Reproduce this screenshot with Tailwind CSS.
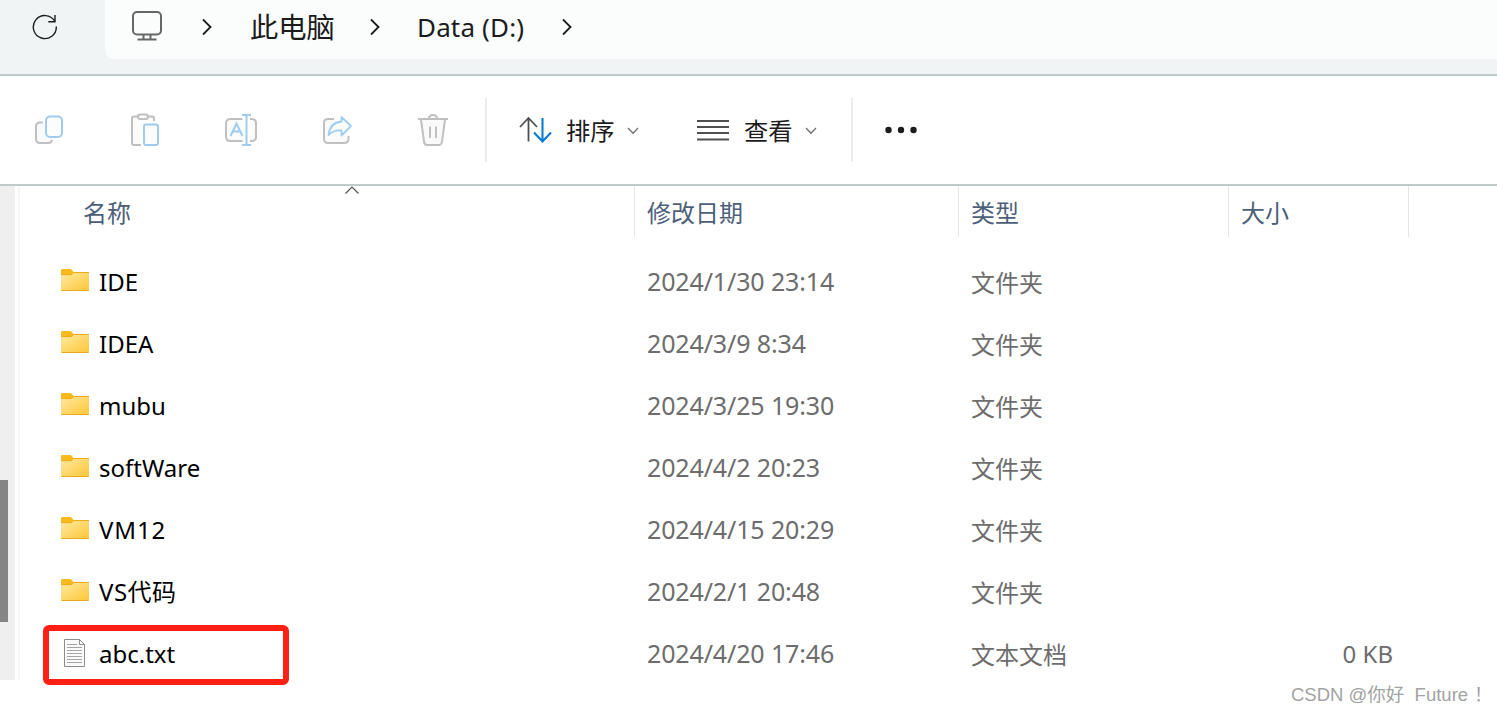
<!DOCTYPE html>
<html lang="zh-CN">
  <head>
    <meta charset="UTF-8" />
    <title>Data (D:)</title>
    <meta name="viewport" content="width=device-width, initial-scale=1.0" />
    <script src="https://cdn.jsdelivr.net/npm/@tailwindcss/browser@4"></script>
  </head>
  <body class="relative h-[713px] w-[1497px] overflow-hidden bg-white font-['Noto_Sans','Noto_Sans_CJK_SC',sans-serif] text-black">
    <!-- Shared icons -->
    <svg class="absolute h-0 w-0">
      <defs>
        <linearGradient id="folderFill" x1="0" y1="0" x2="1" y2="1">
          <stop offset="0" stop-color="#ffe8a0" />
          <stop offset="1" stop-color="#fdc736" />
        </linearGradient>
        <symbol id="folder" viewBox="0 0 28 22">
          <path d="M0 1Q0 0 1 0H9Q10 0 11 1.2L12.5 3H27Q28 3 28 4V10H0Z" fill="#fab91c" />
          <path d="M0 6H9.5Q10.5 6 11.2 5.2L12.2 4H28V21Q28 22 27 22H1Q0 22 0 21Z" fill="url(#folderFill)" />
          <path d="M0 5.6H9.5Q10.5 5.6 11.2 4.8L12.6 3.5H28" fill="none" stroke="#eeab18" />
          <path d="M.5 21.5H27.5" stroke="#e9a820" />
        </symbol>
        <symbol id="chevron" viewBox="0 0 10 18">
          <path d="M1 1.5L8.5 9L1 16.5" fill="none" stroke="#1c1c1c" stroke-width="1.8" />
        </symbol>
      </defs>
    </svg>

    <!-- Address bar -->
    <header class="flex h-[76px] items-start border-b-2 border-[#bfcacb] bg-[#f0f4f5]">
      <div class="flex h-[59px] w-[105px] items-start pt-[13px] pl-8">
        <svg class="h-[27px] w-[27px]" viewBox="0 0 27 27" fill="none" stroke="#1c1c1c" stroke-width="1.4">
          <path d="M24.3 13.5A11.5 11.5 0 1 1 22.7 8.2" />
          <path d="M23 2V8.7H16.3" />
        </svg>
      </div>
      <nav class="flex h-[59px] flex-1 items-start rounded-bl-lg bg-[#fbfdfc] text-[#1c1c1c]">
        <svg class="mt-[10px] ml-[27px] h-8 w-[30px]" viewBox="0 0 30 32" fill="none" stroke="#666" stroke-width="2">
          <rect x="1" y="2" width="28" height="22.5" rx="4" />
          <path d="M11.5 25V29M18.5 25V29M5.5 29.5H24.5" />
        </svg>
        <svg class="mt-[18px] ml-10 h-[18px] w-[10px]"><use href="#chevron" /></svg>
        <span class="ml-[38px] w-[85px] text-[28.3px] leading-[54px] whitespace-nowrap">此电脑</span>
        <svg class="mt-[18px] ml-[35px] h-[18px] w-[10px]"><use href="#chevron" /></svg>
        <span class="ml-[37px] w-[109px] text-[26px] leading-[54px] tracking-[0.15px] whitespace-nowrap">Data (D:)</span>
        <svg class="mt-[18px] ml-[36px] h-[18px] w-[10px]"><use href="#chevron" /></svg>
      </nav>
    </header>

    <!-- Toolbar -->
    <div class="flex h-[110px] items-center border-b-2 border-[#bfcacb] text-2xl text-[#1c1c1c]">
      <svg class="ml-[34px] h-9 w-[30px]" viewBox="0 0 30 36" fill="none" stroke-width="2">
        <path d="M9 10.5H6Q2 10.5 2 14.5V27Q2 31 6 31H14Q17.5 31 18 28" fill="#fafafa" stroke="#c0c0c0" />
        <rect x="12" y="4.5" width="16" height="20.5" rx="4" fill="#fcfcfc" stroke="#a0cdef" />
      </svg>
      <svg class="ml-[66px] h-9 w-[30px]" viewBox="0 0 30 36" fill="none" stroke-width="2">
        <path d="M8 4.5H4Q2 4.5 2 6.5V31Q2 33 4 33H11M18 4.5H22Q24 4.5 24 6.5V9" fill="#fbfbfb" stroke="#c0c0c0" />
        <rect x="8" y="2.5" width="10" height="4.5" rx="2.2" fill="#fff" stroke="#c0c0c0" />
        <rect x="14" y="12.5" width="14" height="20.5" rx="2" fill="#fcfcfc" stroke="#a0cdef" />
      </svg>
      <svg class="ml-[65px] h-9 w-[33px]" viewBox="0 0 33 36" fill="none" stroke-width="2">
        <path d="M17.5 7H5.5Q1 7 1 11.5V24.5Q1 29 5.5 29H17.5M25 7H27Q31 7 31 11.5V24.5Q31 29 27 29H25" fill="#fbfbfb" stroke="#c0c0c0" />
        <path d="M21.5 3V33M17 3H26M17 33H26M5.5 24L11.5 11.5L17.5 24M8 19.5H15" stroke="#a0cdef" />
      </svg>
      <svg class="ml-[64px] h-9 w-[31px]" viewBox="0 0 31 36" fill="none" stroke-width="2">
        <path d="M12 7H6Q2 7 2 11V27Q2 31 6 31H22Q26.5 31 26.5 27V24" fill="#fafafa" stroke="#c0c0c0" />
        <path d="M19.5 5L29 14L19.5 23.5V18.5Q12 17.5 6.5 23Q8 10.5 19.5 9.5Z" fill="#fcfcfc" stroke="#a0cdef" stroke-width="1.8" stroke-linejoin="round" />
      </svg>
      <svg class="ml-[65px] h-9 w-[30px]" viewBox="0 0 30 36" fill="none" stroke="#c0c0c0" stroke-width="2">
        <path d="M3 7.5L6 29.5Q6.4 33 9 33H21Q23.6 33 24 29.5L27 7.5" fill="#fafafa" />
        <path d="M0 7H30M11 7Q11 3 15 3T19 7M12 14.5V26M18 14.5V26" />
      </svg>
      <div class="ml-[37px] h-16 w-0.5 bg-[#ececec]"></div>
      <svg class="ml-8 h-9 w-[33px]" viewBox="0 0 33 36" fill="none" stroke-width="1.8">
        <path d="M9.5 29.5V6.5M1 15L9.5 6L18 15" stroke="#505050" />
        <path d="M23.5 6V29M15 20.5L23.5 29.5L32 20.5" stroke="#0078d4" stroke-width="2" />
      </svg>
      <span class="mt-0.5 ml-[14px] w-[49px] text-[24.3px]">排序</span>
      <svg class="mt-px ml-3 h-2 w-3" viewBox="0 0 12 8" fill="none" stroke="#707070" stroke-width="1.3"><path d="M1 1L6 6.3L11 1" /></svg>
      <svg class="ml-[58px] h-[22px] w-8" viewBox="0 0 32 22" stroke="#505050" stroke-width="1.8">
        <path d="M0 2H32M0 8H32M0 14H32M0 20.5H32" />
      </svg>
      <span class="mt-0.5 ml-[15px] w-[49px] text-[24.3px]">查看</span>
      <svg class="mt-px ml-3 h-2 w-3" viewBox="0 0 12 8" fill="none" stroke="#707070" stroke-width="1.3"><path d="M1 1L6 6.3L11 1" /></svg>
      <div class="ml-[34px] h-16 w-0.5 bg-[#ececec]"></div>
      <svg class="ml-8 h-2 w-8" viewBox="0 0 32 8" fill="#1c1c1c">
        <circle cx="3.5" cy="4" r="3.2" />
        <circle cx="16" cy="4" r="3.2" />
        <circle cx="28.5" cy="4" r="3.2" />
      </svg>
    </div>

    <div class="flex">
      <!-- Navigation pane scrollbar -->
      <div class="mr-[3px] h-[494px] w-[15px] bg-[#efefef] pt-[294px]">
        <div class="h-[142px] w-2 bg-[#858585]"></div>
      </div>
      <div class="h-[494px] w-0.5 bg-[#f6f6f6]"></div>

      <!-- File list -->
      <main class="flex-1">
        <div class="relative grid h-[51px] grid-cols-[615px_324px_270px_180px] text-2xl leading-[53px] text-[#4c607a]">
          <svg class="absolute top-0 left-[325px] h-[9px] w-[14px]" viewBox="0 0 14 9" fill="none" stroke="#505050" stroke-width="1.2"><path d="M.5 7.5L7 1L13.5 7.5" /></svg>
          <div class="h-[51px] border-r border-[#e5e5e5] pl-[63px]">名称</div>
          <div class="h-[51px] border-r border-[#e5e5e5] pl-3">修改日期</div>
          <div class="h-[51px] border-r border-[#e5e5e5] pl-3">类型</div>
          <div class="h-[51px] border-r border-[#e5e5e5] pl-3">大小</div>
        </div>
        <div id="fileRows" class="pt-[14px]"></div>
      </main>
    </div>

    <!-- Highlight around abc.txt -->
    <div class="absolute top-[625px] left-[43px] h-[60px] w-[246px] rounded-md border-6 border-[#ff2013]"></div>

    <div class="absolute top-[681px] left-[1291px] font-['Liberation_Sans','Noto_Sans_CJK_SC',sans-serif] text-[18.5px] leading-7 whitespace-pre text-[#a3a3a3]">CSDN @你好  Future<span class="ml-1.5">！</span></div>

    <script>
      const files = [
        { name: "IDE", date: "2024/1/30 23:14", type: "文件夹" },
        { name: "IDEA", date: "2024/3/9 8:34", type: "文件夹" },
        { name: "mubu", date: "2024/3/25 19:30", type: "文件夹" },
        { name: "softWare", date: "2024/4/2 20:23", type: "文件夹" },
        { name: "VM12", date: "2024/4/15 20:29", type: "文件夹", spacing: "tracking-[0.9px]" },
        { name: "VS代码", date: "2024/2/1 20:48", type: "文件夹", spacing: "tracking-[0.5px]" },
        { name: "abc.txt", date: "2024/4/20 17:46", type: "文本文档", size: "0 KB" }
      ];

      const folderIcon = `<svg class="mb-1 ml-[41px] mr-[10px] h-[22px] w-7"><use href="#folder" /></svg>`;
      const textIcon = `
        <svg class="mb-[2px] ml-[43px] mr-[13px] h-7 w-[23px]" viewBox="0 0 23 28" fill="none" stroke="#8c8c8c">
          <path d="M1.5 .5H16.5L21.5 5.5V27.5H1.5Z" fill="#fafafa" />
          <path d="M16.5 .5V5.5H21.5" />
          <path d="M4 5.5H14M4 8.5H19M4 11.5H19M4 14.5H19M4 17.5H19M4 20.5H19M4 23.5H19" stroke="#a4a4a4" />
        </svg>`;

      document.getElementById("fileRows").innerHTML = files.map((file) => `
        <div class="grid h-[62px] grid-cols-[615px_324px_270px_180px] items-center text-2xl text-[#6d6d6d]">
          <div class="flex items-center text-black">${file.size ? textIcon : folderIcon}<span class="${file.spacing || ""}">${file.name}</span></div>
          <div class="pl-3 text-[25px] tracking-[-0.13px]">${file.date}</div>
          <div class="pt-px pl-3">${file.type}</div>
          <div class="pr-4 text-right">${file.size || ""}</div>
        </div>`).join("");
    </script>
  </body>
</html>
